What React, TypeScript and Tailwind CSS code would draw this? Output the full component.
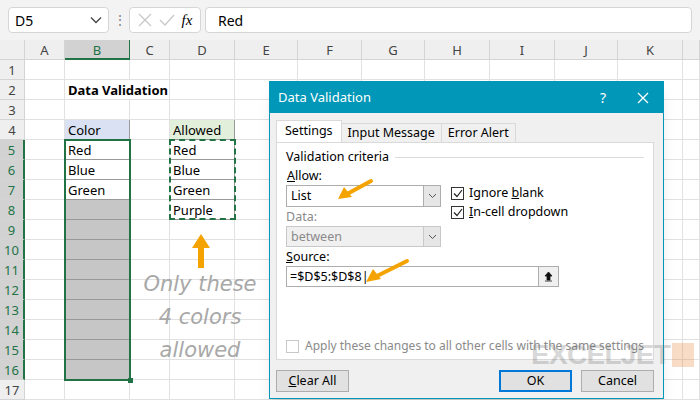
import React from "react";

const cols = ["", "A", "B", "C", "D", "E", "F", "G", "H", "I", "J", "K", ""];
const widths = [25, 40, 65, 40, 65, 63, 64, 63, 65, 65, 63, 65, 17];

function Cell({ r, c }: { r: number; c: number }) {
  let text = "";
  let cls = "bg-white";
  let bold = false;
  if (c === 2 && r === 4) { text = "Color"; cls = "bg-[#d9e1f2]"; }
  if (c === 2 && r === 5) text = "Red";
  if (c === 2 && r === 6) text = "Blue";
  if (c === 2 && r === 7) text = "Green";
  if (c === 2 && r >= 8 && r <= 16) cls = "bg-[#c6c6c6]";
  if (c === 4 && r === 4) { text = "Allowed"; cls = "bg-[#e2efda]"; }
  if (c === 4 && r === 5) text = "Red";
  if (c === 4 && r === 6) text = "Blue";
  if (c === 4 && r === 7) text = "Green";
  if (c === 4 && r === 8) text = "Purple";
  if (c === 2 && r === 2) { text = "Data Validation"; bold = true; }
  const showBorder = (c === 2 && r >= 4 && r <= 16) || (c === 4 && r >= 4 && r <= 8);
  return (
    <div className={`h-5 ${cls} ${showBorder ? "border-r border-b border-[#999]" : "border-r border-b border-[#e1e1e1]"} ${c===2&&r===2?"overflow-visible relative z-10 border-r-0":"overflow-hidden"} whitespace-nowrap pl-[3px] text-[13px] leading-5 text-black ${bold ? "font-bold" : ""}`}>
      {text}
    </div>
  );
}

export default function App() {
  const rows = Array.from({ length: 17 }, (_, i) => i + 1);
  return (
    <div className="relative w-[700px] h-[400px] overflow-hidden bg-white" style={{ fontFamily: "'Noto Sans', 'Open Sans', sans-serif" }}>
      <div className="h-10 bg-[#f3f3f3] flex items-center gap-1 px-2 text-[14px]">
        <div className="w-[101px] h-[26px] bg-white border border-[#d6d6d6] rounded flex items-center justify-between px-1.5">
          <span>D5</span>
          <svg width="12" height="8" viewBox="0 0 12 8"><path d="M1 1.5 6 6.5 11 1.5" fill="none" stroke="#444" strokeWidth="1.3" /></svg>
        </div>
        <div className="w-3 text-center text-[#888] leading-none">⋮</div>
        <div className="w-[72px] h-[26px] bg-white border border-[#d6d6d6] rounded flex items-center justify-around px-1">
          <svg width="14" height="14" viewBox="0 0 14 14"><path d="M1 1 13 13M13 1 1 13" stroke="#c8c8c8" strokeWidth="1.3" /></svg>
          <svg width="16" height="14" viewBox="0 0 16 14"><path d="M1 7 6 12 15 2" fill="none" stroke="#c8c8c8" strokeWidth="1.3" /></svg>
          <span className="italic text-[15px]" style={{ fontFamily: "'Liberation Serif', serif" }}>fx</span>
        </div>
        <div className="flex-1 h-[26px] bg-white border border-[#d6d6d6] rounded flex items-center px-3">Red</div>
      </div>
      <div className="grid" style={{ gridTemplateColumns: widths.map((w) => w + "px").join(" ") }}>
        {cols.map((c, i) => (
          <div key={"h" + i} className={`h-5 text-[13px] leading-5 text-center border-r border-b ${i === 2 ? "bg-[#d2d2d2] border-b-2 border-b-[#217346] text-[#217346]" : "bg-[#efefef] border-[#d4d4d4] text-[#444]"}`}>
            {c}
          </div>
        ))}
        {rows.map((r) => (
          <React.Fragment key={r}>
            <div className={`h-5 text-[13px] leading-5 text-center border-r border-b border-[#d4d4d4] ${r >= 5 && r <= 16 ? "bg-[#d2d2d2] text-[#217346] border-r-2 border-r-[#217346]" : "bg-[#efefef] text-[#444]"}`}>{r}</div>
            {widths.slice(1).map((_, ci) => <Cell key={ci} r={r} c={ci + 1} />)}
          </React.Fragment>
        ))}
      </div>
      <div className="absolute left-[64px] top-[139px] w-[67px] h-[242px] border-2 border-[#217346] pointer-events-none" />
      <div className="absolute left-[128px] top-[378px] w-[5px] h-[5px] bg-[#217346]" />
      <div className="absolute left-[169px] top-[139px] w-[67px] h-[81px] border-2 border-dashed border-[#217346]" />
      <svg className="absolute left-[190px] top-[232px]" width="22" height="38" viewBox="0 0 22 38"><path d="M11 2 2 16H8V36H14V16H20Z" fill="#f5a300" /></svg>
      <div className="absolute left-[140px] top-[268px] w-[120px] text-center text-[#a8a8a8] text-[21px] leading-[33px] italic" style={{ fontFamily: "'Comic Sans MS', 'DejaVu Sans', cursive" }}>
        Only these<br />4 colors<br />allowed
      </div>
      <div className="absolute left-[269px] top-[81px] w-[395px] h-[318px] bg-[#f0f0f0] border border-[#0097b8] shadow-lg text-[12.5px] text-black" style={{ fontFamily: "'Noto Sans', sans-serif" }}>
        <div className="h-[31px] bg-[#0097b8] flex items-center pl-[8px] text-white text-[13px]">
          <span className="flex-1">Data Validation</span>
          <span className="w-[40px] text-center text-[14px]">?</span>
          <svg className="mx-[14px]" width="12" height="12" viewBox="0 0 12 12"><path d="M1 1 11 11M11 1 1 11" stroke="white" strokeWidth="1.3" /></svg>
        </div>
        <div className="px-[6px] pt-[9px]">
          <div className="flex items-end h-[20px] relative z-10">
            <div className="h-[22px] px-[8px] bg-white border border-[#d9d9d9] border-b-0 flex items-center">Settings</div>
            <div className="h-[19px] px-[6px] bg-[#f0f0f0] border border-[#d9d9d9] border-b-0 border-l-0 flex items-center">Input Message</div>
            <div className="h-[19px] px-[6px] bg-[#f0f0f0] border border-[#d9d9d9] border-b-0 border-l-0 flex items-center">Error Alert</div>
          </div>
          <div className="relative bg-white border border-[#d9d9d9] h-[218px] w-[378px] px-[9px] pt-[5px]">
            <div className="flex items-center gap-[6px] leading-[18px]"><span>Validation criteria</span><div className="flex-1 h-px bg-[#dcdcdc]" /></div>
            <div className="flex gap-[10px] mt-[1px]">
              <div className="w-[155px]">
                <div className="pl-[1px] leading-[18px]"><u>A</u>llow:</div>
                <div className="h-[22px] border border-[#adadad] flex bg-white">
                  <span className="flex-1 px-[4px] leading-[20px]">List</span>
                  <div className="w-[17px] bg-[#e6e6e6] border-l border-[#adadad] flex items-center justify-center"><svg width="9" height="6" viewBox="0 0 9 6"><path d="M1 1 4.5 4.5 8 1" fill="none" stroke="#555" /></svg></div>
                </div>
                <div className="leading-[18px] mt-[1px] text-[#8a8a8a]">Data:</div>
                <div className="h-[21px] border border-[#c8c8c8] flex bg-[#f0f0f0]">
                  <span className="flex-1 px-[4px] leading-[19px] text-[#8a8a8a]">between</span>
                  <div className="w-[17px] bg-[#e6e6e6] border-l border-[#c8c8c8] flex items-center justify-center"><svg width="9" height="6" viewBox="0 0 9 6"><path d="M1 1 4.5 4.5 8 1" fill="none" stroke="#555" /></svg></div>
                </div>
              </div>
              <div className="mt-[18px] flex flex-col gap-[3px]">
                {[["Ignore ", "b", "lank"], ["", "I", "n-cell dropdown"]].map(([a, u, b], i) => (
                  <div key={i} className="flex items-center gap-[5px] h-[16px]">
                    <div className="w-[13px] h-[13px] border border-[#333] bg-white flex items-center justify-center"><svg width="10" height="9" viewBox="0 0 10 9"><path d="M1 4.5 4 7.5 9 1" fill="none" stroke="#222" strokeWidth="1.2" /></svg></div>
                    <span>{a}<u>{u}</u>{b}</span>
                  </div>
                ))}
              </div>
            </div>
            <div className="leading-[18px] mt-[1px]"><u>S</u>ource:</div>
            <div className="w-[273px] h-[21px] border border-[#adadad] flex bg-white">
              <span className="flex-1 px-[3px] leading-[19px]">=$D$5:$D$8|</span>
              <div className="w-[20px] bg-[#f0f0f0] border-l border-[#adadad] flex items-center justify-center"><svg width="9" height="11" viewBox="0 0 9 11"><path d="M4.5 1 1 5H3V9H6V5H8Z M1 10H8" fill="#111" stroke="#111" strokeWidth="0.8" /></svg></div>
            </div>
            <div className="absolute left-[9px] top-[194px] flex items-center gap-[6px] text-[#8a8a8a] whitespace-nowrap">
              <div className="w-[13px] h-[13px] border border-[#c8c8c8] bg-white" />
              <span className="text-[12px]">Apply these changes to all other cells with the same settings</span>
            </div>
          </div>
          <div className="flex mt-[10px] gap-[9px]">
            <div className="w-[73px] h-[22px] bg-[#e1e1e1] border border-[#adadad] flex items-center justify-center"><span><u>C</u>lear All</span></div>
            <div className="flex-1" />
            <div className="w-[73px] h-[22px] bg-[#e1e1e1] border-2 border-[#0078d7] flex items-center justify-center">OK</div>
            <div className="w-[73px] h-[22px] bg-[#e1e1e1] border border-[#adadad] flex items-center justify-center mr-[3px]">Cancel</div>
          </div>
        </div>
      </div>
      <svg className="absolute left-[335px] top-[178px]" width="40" height="24" viewBox="0 0 40 24"><path d="M36 3 12 16" stroke="#f5a300" strokeWidth="4" strokeLinecap="round" /><path d="M3 21 9 9 17 19Z" fill="#f5a300" /></svg>
      <svg className="absolute left-[363px] top-[258px]" width="48" height="26" viewBox="0 0 48 26"><path d="M44 3 14 18" stroke="#f5a300" strokeWidth="4" strokeLinecap="round" /><path d="M3 24 10 11 18 21Z" fill="#f5a300" /></svg>
      <div className="absolute left-[531px] top-[341px] flex items-center gap-[2px] opacity-25 pointer-events-none">
        <span className="text-[28px] font-black text-[#666] tracking-tight leading-none" style={{ fontFamily: "'Liberation Sans', sans-serif" }}>EXCELJET</span>
        <div className="w-[22px] h-[24px] bg-[#e87722]" />
      </div>
    </div>
  );
}
